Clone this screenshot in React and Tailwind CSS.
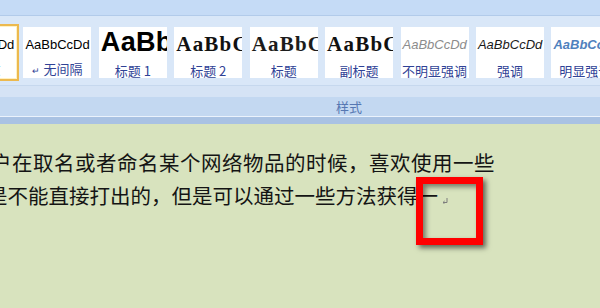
import React from 'react'

const cjk = '"Noto Sans CJK SC", sans-serif'

const styles = [
  { label: '正文', arrow: true, sample: 'AaBbCcDd', cls: 'text-[13px] mt-[11px] text-black', font: '"Liberation Sans", sans-serif', selected: true },
  { label: '无间隔', arrow: true, sample: 'AaBbCcDd', cls: 'text-[13px] mt-[11px] text-black', font: '"Liberation Sans", sans-serif' },
  { label: '标题 1', sample: 'AaBb', cls: 'text-[27px] font-bold mt-[2px] text-black tracking-[0.3px]', font: '"Liberation Sans", sans-serif' },
  { label: '标题 2', sample: 'AaBbC', cls: 'text-[21px] font-bold mt-[7px] text-[#111] tracking-[1.2px]', font: '"Liberation Serif", serif' },
  { label: '标题', sample: 'AaBbC', cls: 'text-[21px] font-bold mt-[7px] text-[#1c1c1c] tracking-[1.2px]', font: '"Liberation Serif", serif' },
  { label: '副标题', sample: 'AaBbC', cls: 'text-[21px] font-bold mt-[7px] text-[#111] tracking-[1.2px]', font: '"Liberation Serif", serif' },
  { label: '不明显强调', sample: 'AaBbCcDd', cls: 'text-[13px] italic mt-[11px] text-[#8c8c8c]', font: '"Liberation Sans", sans-serif' },
  { label: '强调', sample: 'AaBbCcDd', cls: 'text-[13px] italic mt-[11px] text-[#1a1a1a]', font: '"Liberation Sans", sans-serif' },
  { label: '明显强调', sample: 'AaBbCcDd', cls: 'text-[13px] italic font-bold mt-[11px] text-[#4f81bd]', font: '"Liberation Sans", sans-serif' },
]

function StyleCard({ s }) {
  return (
    <div
      className={
        'w-[68px] h-[51px] shrink-0 bg-white flex flex-col justify-between ' +
        (s.selected ? 'shadow-[0_0_0_1px_#fff1c4,0_0_0_3px_#ecb94f]' : '')
      }
    >
      <div className="overflow-hidden whitespace-nowrap pl-[2px]">
        <div className={'leading-none ' + s.cls} style={{ fontFamily: s.font }}>
          {s.sample}
        </div>
      </div>
      <div
        className="text-[13px] leading-[14px] text-center text-[#2f4296] whitespace-nowrap"
        style={{ fontFamily: cjk }}
      >
        {s.arrow && <span className="text-[9px] mr-[3px]">↵</span>}
        {s.label}
      </div>
    </div>
  )
}

export default function App() {
  return (
    <div className="w-[600px] h-[308px] overflow-hidden flex flex-col bg-[#d8e3be]">
      <div className="h-[16px] shrink-0 bg-[#c5dbf6] border-b border-[#b2cbea]" />
      <div className="h-[69px] shrink-0 bg-[#d9e7f8] pt-[11px]">
        <div className="flex gap-[7.43px] ml-[-52px]">
          {styles.map((s, i) => (
            <StyleCard key={i} s={s} />
          ))}
        </div>
      </div>
      <div className="h-px shrink-0 bg-[#c6d8ee]" />
      <div className="h-[11px] shrink-0 bg-[#d5e3f5]" />
      <div
        className="h-[19px] shrink-0 bg-[#c3d8f1] text-[13px] leading-[19px] text-[#5677b2] pl-[336px]"
        style={{ fontFamily: cjk }}
      >
        样式
      </div>
      <div className="h-px shrink-0 bg-[#eaf2fc]" />
      <div className="h-[7px] shrink-0 bg-[#a9c2e3]" />
      <div className="relative flex-1 pt-[22px] text-[20.5px] leading-[32.5px] text-[#141414]" style={{ fontFamily: cjk }}>
        <div className="whitespace-nowrap ml-[-9px] tracking-[0.5px]">
          户在取名或者命名某个网络物品的时候，喜欢使用一些
        </div>
        <div className="whitespace-nowrap ml-[-13px]">
          是不能直接打出的，但是可以通过一些方法获得一
          <svg width="6" height="6" viewBox="0 0 6 6" className="inline-block ml-[4px] align-baseline">
            <path d="M5 0 V4.5 H1 M1 4.5 L2.6 3 M1 4.5 L2.6 6" stroke="#7d7d7d" strokeWidth="1" fill="none" />
          </svg>
        </div>
        <div className="absolute left-[416px] top-[53px] w-[67px] h-[68px] border-[7px] border-[#ff0000] shadow-[3px_3px_5px_rgba(0,0,0,0.55),inset_3px_3px_5px_rgba(0,0,0,0.45)]" />
      </div>
    </div>
  )
}
